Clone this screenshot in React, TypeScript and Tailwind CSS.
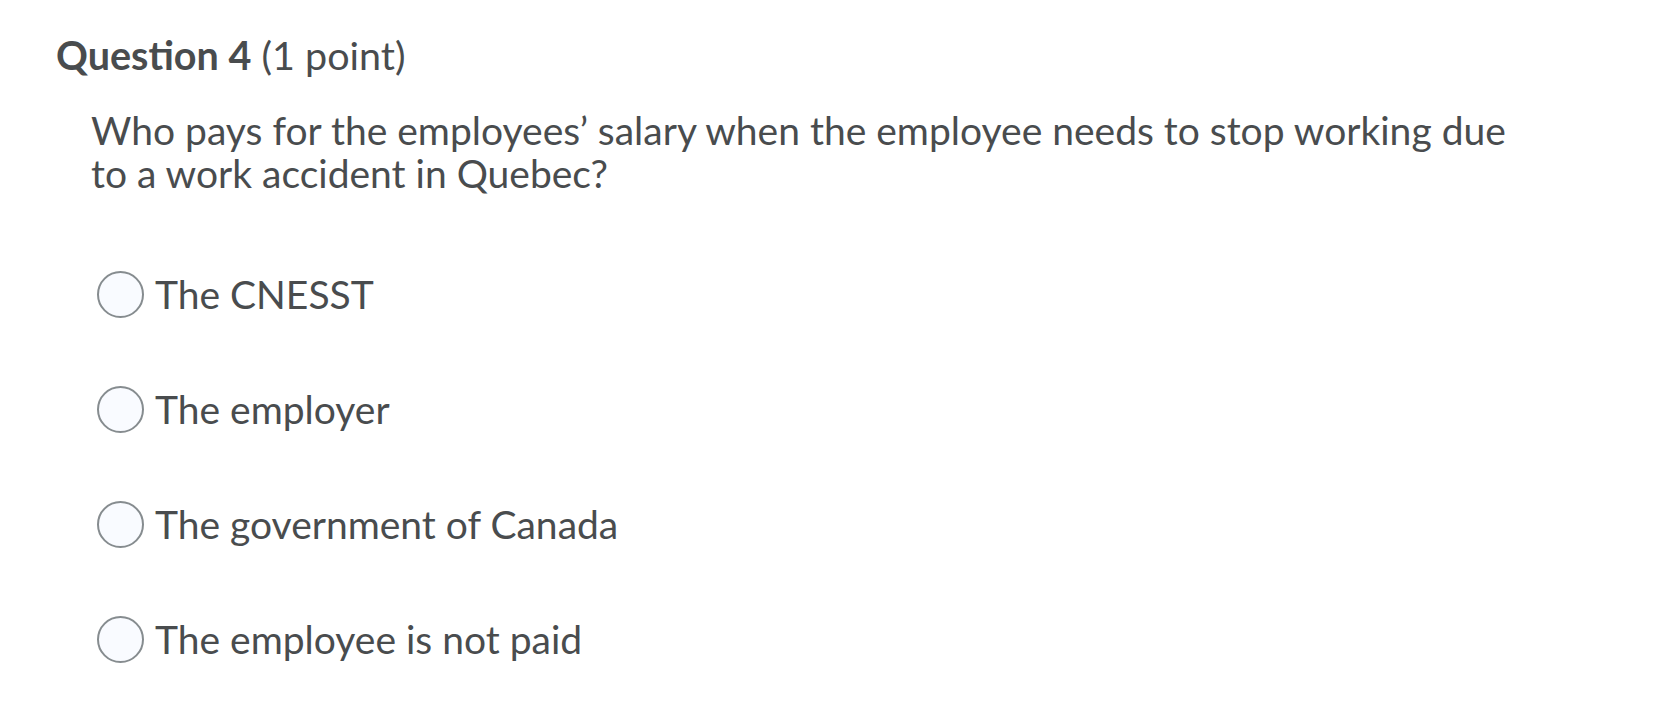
export default function App() {
  const options = [
    'The CNESST',
    'The employer',
    'The government of Canada',
    'The employee is not paid',
  ]

  return (
    <div className="min-h-screen bg-white text-[#494c4e] pl-[56px] pt-[33px]" style={{ fontFamily: 'Lato, "Noto Sans", sans-serif' }}>
      <h1 className="text-[39.5px] leading-[44px]">
        <span className="font-bold">Question 4</span> <span className="font-normal">(1 point)</span>
      </h1>

      <div className="pl-[35px] mt-[32px]">
        <p className="text-[39px] leading-[43px] max-w-[1430px]">
          Who pays for the employees’ salary when the employee needs to stop working due to a work accident in Quebec?
        </p>

        <div className="mt-[75px] flex flex-col gap-[67px] pl-[6px]">
          {options.map(opt => (
            <label key={opt} className="flex items-center gap-[11px] h-[48px]">
              <span className="w-[47px] h-[47px] rounded-full border-2 border-[#868c8f] bg-[#f9fbff] flex-shrink-0" />
              <span className="text-[39px] leading-[48px]">{opt}</span>
            </label>
          ))}
        </div>
      </div>
    </div>
  )
}
